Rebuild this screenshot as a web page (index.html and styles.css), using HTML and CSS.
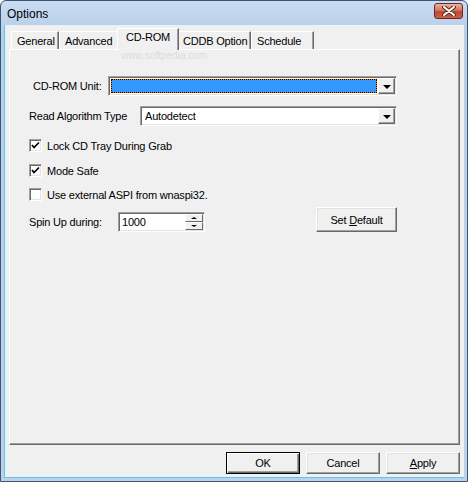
FILE: index.html
```html
<!DOCTYPE html>
<html>
  <head>
    <meta charset="UTF-8">
    <title>Options</title>
    <link rel="stylesheet" href="styles.css">
  </head>
  <body>
    <div class="window">
      <div class="titlebar">
        <span class="title">Options</span>
        <span class="close">
          <svg width="14" height="10" viewBox="0 0 14 10">
            <path d="M2 1 L12 9 M12 1 L2 9" stroke="#5a2a20" stroke-width="4" stroke-linecap="round"/>
            <path d="M2 1 L12 9 M12 1 L2 9" stroke="#ffffff" stroke-width="2" stroke-linecap="round"/>
          </svg>
        </span>
      </div>
      <div class="client">
        <div class="tabs">
          <div class="tab t-general">General</div>
          <div class="tab t-advanced">Advanced</div>
          <div class="tab t-cdrom active">CD-ROM</div>
          <div class="tab t-cddb">CDDB Option</div>
          <div class="tab t-schedule">Schedule</div>
        </div>
        <div class="panel">
          <div class="row row-unit">
            <span class="label label-unit">CD-ROM Unit:</span>
            <div class="combo combo-unit">
              <div class="combo-field focused"><span class="focus-box"></span></div>
              <span class="drop"><i class="arrow"></i></span>
            </div>
          </div>
          <div class="row row-algo">
            <span class="label">Read Algorithm Type</span>
            <div class="combo combo-algo">
              <div class="combo-field">Autodetect</div>
              <span class="drop"><i class="arrow"></i></span>
            </div>
          </div>
          <label class="check check-1">
            <span class="box">
              <svg width="9" height="9" viewBox="0 0 9 9"><path d="M1 4 L3 6.5 L8 1.5" stroke="#000" stroke-width="1.7" fill="none"/></svg>
            </span>
            Lock CD Tray During Grab
          </label>
          <label class="check check-2">
            <span class="box">
              <svg width="9" height="9" viewBox="0 0 9 9"><path d="M1 4 L3 6.5 L8 1.5" stroke="#000" stroke-width="1.7" fill="none"/></svg>
            </span>
            Mode Safe
          </label>
          <label class="check check-3">
            <span class="box"></span>
            Use external ASPI from wnaspi32.
          </label>
          <div class="row row-spin">
            <div class="spin-group">
              <span class="label label-spin">Spin Up during:</span>
              <div class="spin">
                <span class="spin-value">1000</span>
                <span class="spin-btns">
                  <span class="spin-btn"><i class="mini up"></i></span>
                  <span class="spin-btn"><i class="mini down"></i></span>
                </span>
              </div>
            </div>
            <button class="btn btn-default">Set <u>D</u>efault</button>
          </div>
        </div>
        <div class="footer">
          <button class="btn btn-ok">OK</button>
          <button class="btn">Cancel</button>
          <button class="btn"><u>A</u>pply</button>
        </div>
      </div>
      <div class="mark-url">www.softpedia.com</div>
    </div>
  </body>
</html>
```

FILE: styles.css
```css
body {
  margin: 0;
  padding: 0;
  background-color: #ffffff;
  font-family: "Liberation Sans", Arial, sans-serif;
  font-size: 11px;
  color: #000;
}

.window {
  position: relative;
  width: 468px;
  height: 482px;
  box-sizing: border-box;
  border: 1px solid #3f5470;
  border-radius: 6px 6px 0 0;
  background: linear-gradient(#c9dcf2, #b8cfea 30px, #bcd2ec);
  display: flex;
  flex-direction: column;
  overflow: hidden;
}

.titlebar {
  height: 24px;
  display: flex;
  align-items: center;
  padding: 0 4px 0 6px;
}

.title {
  font-size: 12px;
  color: #000;
  flex: 1;
  padding-top: 1px;
}

.close {
  width: 27px;
  height: 14px;
  margin-top: -4px;
  border: 1px solid #6a2a22;
  border-radius: 3px;
  background: linear-gradient(#e9b2a4, #d47560 45%, #c0452f 55%, #c9604a);
  display: flex;
  align-items: center;
  justify-content: center;
}

.client {
  flex: 1;
  margin: 0 3px 3px 3px;
  background-color: #f0f0f0;
  border-left: 1px solid #5ac8ee;
  border-bottom: 1px solid #5ac8ee;
  display: flex;
  flex-direction: column;
  letter-spacing: -0.2px;
}

/* tabs */

.tabs {
  height: 20px;
  padding: 5px 0 0 6px;
  display: flex;
  align-items: flex-end;
  position: relative;
  z-index: 2;
}

.tab {
  height: 18px;
  box-sizing: border-box;
  border-top: 1px solid #fff;
  border-left: 1px solid #fff;
  border-right: 1px solid #696969;
  box-shadow: inset -1px 0 #a0a0a0;
  padding: 3px 0 0 5px;
  margin-bottom: 1px;
  background-color: #f0f0f0;
}

.t-general { width: 48px; }
.t-advanced { width: 60px; }
.t-cdrom { width: 58px; }
.t-cddb { width: 74px; }
.t-schedule { width: 63px; }

.tab.active {
  height: 22px;
  width: 62px;
  margin: 0 -2px 0 -2px;
  padding: 2px 0 0 8px;
  position: relative;
  z-index: 3;
}

/* panel */

.panel {
  flex: 1;
  margin: 0 4px;
  border-top: 1px solid #fff;
  border-left: 1px solid #fff;
  border-right: 1px solid #696969;
  border-bottom: 1px solid #696969;
  box-shadow: inset -1px -1px #a0a0a0;
  padding: 0 62px 0 19px;
  display: flex;
  flex-direction: column;
  margin-top: -1px;
}

.row {
  display: flex;
  align-items: center;
  height: 20px;
}

.row-unit { margin-top: 26px; }
.row-algo { margin-top: 10px; }

.label-unit { margin-left: 4px; }

.combo {
  margin-left: auto;
  height: 20px;
  box-sizing: border-box;
  border-top: 1px solid #a0a0a0;
  border-left: 1px solid #a0a0a0;
  border-right: 1px solid #fff;
  border-bottom: 1px solid #fff;
  box-shadow: inset 1px 1px #696969, inset -1px -1px #e3e3e3;
  background-color: #fff;
  padding: 2px;
  display: flex;
}

.combo-unit { width: 289px; }
.combo-algo { width: 257px; }

.combo-field {
  flex: 1;
  line-height: 14px;
  padding-left: 2px;
}

.combo-field.focused {
  background-color: #e08a2c;
  padding: 0;
  margin-right: 1px;
  display: flex;
}

.focus-box {
  flex: 1;
  border: 1px dotted #000;
  background-color: #3399ff;
  background-clip: padding-box;
}

.drop {
  width: 17px;
  height: 16px;
  margin: -1px -1px -1px 0;
  box-sizing: border-box;
  border-top: 1px solid #fff;
  border-left: 1px solid #fff;
  border-right: 1px solid #696969;
  border-bottom: 1px solid #696969;
  box-shadow: inset -1px -1px #a0a0a0;
  background-color: #f0f0f0;
  display: flex;
  align-items: center;
  justify-content: center;
}

.arrow {
  width: 0;
  height: 0;
  border-left: 4px solid transparent;
  border-right: 4px solid transparent;
  border-top: 4px solid #000;
  margin-top: 1px;
}

/* checkboxes */

.check {
  display: flex;
  align-items: center;
  height: 13px;
  gap: 5px;
}

.check-1 { margin-top: 13px; }
.check-2 { margin-top: 12px; }
.check-3 { margin-top: 11px; }

.box {
  width: 13px;
  height: 13px;
  box-sizing: border-box;
  border-top: 1px solid #a0a0a0;
  border-left: 1px solid #a0a0a0;
  border-right: 1px solid #fff;
  border-bottom: 1px solid #fff;
  box-shadow: inset 1px 1px #696969, inset -1px -1px #e3e3e3;
  background-color: #fff;
  display: flex;
  align-items: center;
  justify-content: center;
}

/* spin row */

.row-spin {
  height: 25px;
  margin-top: 6px;
  align-items: flex-end;
}

.spin-group {
  display: flex;
  align-items: center;
  height: 20px;
}

.label-spin { width: 89px; }

.spin {
  width: 87px;
  height: 20px;
  box-sizing: border-box;
  border-top: 1px solid #a0a0a0;
  border-left: 1px solid #a0a0a0;
  border-right: 1px solid #fff;
  border-bottom: 1px solid #fff;
  box-shadow: inset 1px 1px #696969, inset -1px -1px #e3e3e3;
  background-color: #fff;
  padding: 2px 2px 2px 2px;
  display: flex;
}

.spin-value {
  flex: 1;
  line-height: 15px;
  padding-left: 1px;
}

.spin-btns {
  width: 18px;
  display: flex;
  flex-direction: column;
  margin: -1px -1px -1px 0;
}

.spin-btn {
  flex: 1;
  box-sizing: border-box;
  border-top: 1px solid #fff;
  border-left: 1px solid #fff;
  border-right: 1px solid #696969;
  border-bottom: 1px solid #696969;
  background-color: #f0f0f0;
  display: flex;
  align-items: center;
  justify-content: center;
}

.mini {
  width: 0;
  height: 0;
  border-left: 3px solid transparent;
  border-right: 3px solid transparent;
}

.mini.up { border-bottom: 2px solid #000; }
.mini.down { border-top: 2px solid #000; }

/* buttons */

.btn {
  width: 74px;
  height: 22px;
  padding: 0;
  font-family: "Liberation Sans", Arial, sans-serif;
  font-size: 11px;
  letter-spacing: -0.2px;
  color: #000;
  background-color: #f0f0f0;
  box-sizing: border-box;
  border-top: 1px solid #fff;
  border-left: 1px solid #fff;
  border-right: 1px solid #696969;
  border-bottom: 1px solid #696969;
  box-shadow: inset -1px -1px #a0a0a0, inset 1px 1px #e3e3e3;
}

.btn-default {
  width: 81px;
  height: 25px;
  margin-left: auto;
}

.btn-ok {
  border: 1px solid #000;
  box-shadow: inset 1px 1px #fff, inset -1px -1px #696969, inset -2px -2px #a0a0a0;
}

.footer {
  display: flex;
  justify-content: flex-end;
  gap: 6px;
  padding: 7px 4px 3px 0;
}

/* watermark */

.mark-url {
  position: absolute;
  left: 120px;
  top: 49px;
  font-size: 10px;
  color: #dcdcdc;
  z-index: 5;
}
```
